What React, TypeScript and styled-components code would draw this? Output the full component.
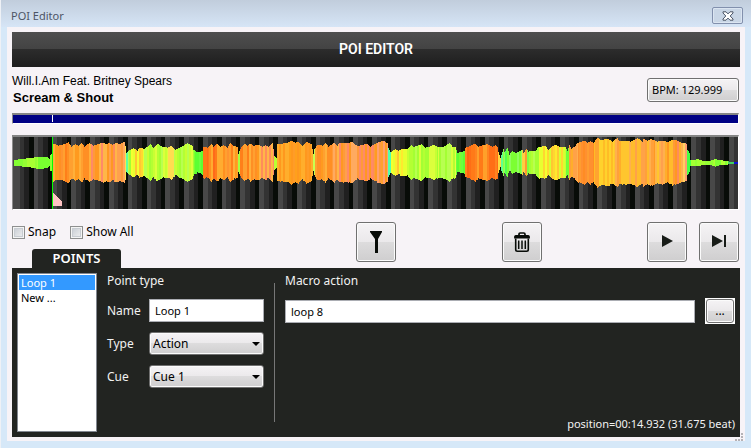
import React, { useState } from "react";
import styled, { createGlobalStyle, css } from "styled-components";

const ui = `"Noto Sans", "Open Sans", sans-serif`;
const arial = `"Liberation Sans", Arial, sans-serif`;

const Global = createGlobalStyle`
  *, *::before, *::after { box-sizing: border-box; }
  body { margin: 0; background: #d6e8f8; font: 12px/16px ${ui}; color: #000; }
  button, input, select { font: inherit; color: inherit; margin: 0; }
`;

const glossy = css`
  background: linear-gradient(#f5f3f5, #ebe9eb 49%, #dddcdd 50%, #cfcecf);
  border: 1px solid #707070;
  border-radius: 3px;
  box-shadow: inset 0 0 0 1px #fbfbfb;
`;

const Frame = styled.div`
  display: flex;
  flex-direction: column;
  min-height: 100vh;
  padding: 0 6px 7px;
  border-left: 1px solid #eef1f6;
`;

const TitleBar = styled.header`
  display: flex;
  align-items: center;
  justify-content: space-between;
  height: 27px;
  margin: 0 -6px;
  padding: 4px 8px 0 10px;
  background: linear-gradient(#c1cddc, #d6e5f6);
`;

const Title = styled.h1`
  margin: 0;
  font-size: 11px;
  font-weight: 400;
  line-height: 16px;
  color: #4d5566;
`;

const CloseButton = styled.button`
  display: flex;
  align-items: center;
  justify-content: center;
  width: 31px;
  height: 17px;
  padding: 0;
  border: 1px solid #8290ad;
  border-radius: 2px;
  background: #c9d6e6;
  box-shadow: inset 0 0 0 1px #dbe5f1;
`;

const Client = styled.main`
  display: flex;
  flex: 1;
  flex-direction: column;
  padding: 5px 5px 4px 5px;
  background: #f7f3f7;
`;

const Banner = styled.h2`
  margin: 0;
  height: 35px;
  background: linear-gradient(#4e4e4e, #434343 49%, #2c2c2c 50%, #1e1e1e);
  color: #fff;
  font: 600 14px/35px Roboto, ${arial};
  text-align: center;
`;

const TrackRow = styled.section`
  display: flex;
  align-items: flex-end;
  justify-content: space-between;
  height: 39px;
  padding-right: 1px;
`;

const Artist = styled.p`
  margin: 0;
  font: 12px/16px ${arial};
`;

const Song = styled(Artist)`
  padding-left: 1px;
  font-size: 13px;
  font-weight: 700;
  line-height: 17px;
`;

const BpmButton = styled.button`
  ${glossy}
  width: 92px;
  height: 24px;
  margin-bottom: 4px;
  padding: 0 4px;
  text-align: left;
  font-size: 11px;
`;

const Sunken = styled.div<{ $fill: string; $height: number }>`
  height: ${(p) => p.$height}px;
  border: 1px solid #fff;
  border-top: 2px solid #858585;
  border-left-color: #8c8c8c;
  background: ${(p) => p.$fill};
`;

const Overview = styled(Sunken)`
  margin: 7px 1px 11px 0;
  padding-left: 39px;
`;

const Cursor = styled.div`
  width: 1px;
  height: 7px;
  background: #fff;
`;

const WaveBox = styled(Sunken)`
  margin-right: 1px;
`;

const WaveSvg = styled.svg`
  display: block;
  width: 100%;
  height: 100%;
`;

const Tools = styled.section`
  display: grid;
  grid-template-columns: 2fr 1fr 1fr 1fr;
  height: 46px;
  margin-top: 12px;
`;

const ToolsLeft = styled.div`
  display: flex;
  flex-direction: column;
  justify-content: space-between;
`;

const Checks = styled.div`
  display: flex;
  gap: 14px;
  padding-top: 2px;
`;

const CheckLabel = styled.label`
  display: flex;
  align-items: center;
  gap: 3px;
  height: 16px;
  font-size: 12px;
`;

const CheckBox = styled.input`
  appearance: none;
  width: 13px;
  height: 13px;
  border: 1px solid #8e8f8f;
  background: linear-gradient(135deg, #c3c8d0, #f3f3f3);
  box-shadow: inset 0 0 0 1px #f4f4f4, inset 0 0 0 2px #c8ccd2;
  &:checked { background: #3a5f9a; }
`;

const Tab = styled.h3`
  width: 89px;
  height: 19px;
  margin: 0 0 0 20px;
  border-radius: 3px 3px 0 0;
  background: #222421;
  color: #fff;
  font: 600 13px/19px ${ui};
  text-align: center;
`;

const ToolCell = styled.div<{ $end?: boolean }>`
  display: flex;
  align-items: flex-start;
  justify-content: ${(p) => (p.$end ? "flex-end" : "center")};
  gap: 12px;
  padding-right: ${(p) => (p.$end ? 1 : 0)}px;
`;

const ToolButton = styled.button`
  ${glossy}
  display: flex;
  align-items: center;
  justify-content: center;
  width: 40px;
  height: 40px;
  padding: 0;
`;

const Panel = styled.section`
  display: flex;
  flex: 1;
  gap: 10px;
  padding: 5px;
  background: #222421;
  color: #f2f2f2;
`;

const PointList = styled.ul`
  width: 80px;
  margin: 0;
  padding: 1px;
  border: 1px solid #828790;
  background: #fff;
  list-style: none;
`;

const PointItem = styled.button<{ $selected: boolean }>`
  display: block;
  width: 100%;
  height: 15px;
  padding: 0 2px;
  border: 0;
  background: ${(p) => (p.$selected ? "#3399ff" : "transparent")};
  color: ${(p) => (p.$selected ? "#fff" : "#000")};
  font-size: 11px;
  line-height: 15px;
  text-align: left;
`;

const PointForm = styled.form`
  display: grid;
  grid-template-columns: 32px 115px;
  grid-template-rows: 16px 23px 23px 23px;
  align-items: center;
  gap: 10px;
  width: 157px;
`;

const GroupName = styled.h4`
  grid-column: 1 / -1;
  margin: 0;
  font-size: 12px;
  font-weight: 400;
  line-height: 16px;
`;

const TextBox = styled.input`
  width: 100%;
  min-width: 0;
  height: 23px;
  padding: 0 5px;
  border: 1px solid #abadb3;
  background: #fff;
  color: #000;
  font-size: 11px;
`;

const SelectWrap = styled.div`
  position: relative;
`;

const Select = styled.select`
  ${glossy}
  appearance: none;
  display: block;
  width: 100%;
  height: 23px;
  padding: 0 3px;
  color: #000;
`;

const Arrow = styled.svg`
  position: absolute;
  top: 10px;
  right: 4px;
  pointer-events: none;
`;

const Divider = styled.div`
  width: 1px;
  margin: 10px 0;
  background: #777;
`;

const Macro = styled.div`
  display: flex;
  flex: 1;
  flex-direction: column;
  justify-content: space-between;
`;

const MacroRow = styled.div`
  display: flex;
  align-items: center;
  gap: 10px;
  margin-top: 9px;
`;

const MoreFrame = styled.div`
  flex: none;
  padding: 1px;
  background: #fff;
`;

const MoreButton = styled.button`
  ${glossy}
  display: block;
  width: 28px;
  height: 24px;
  padding: 0;
  color: #000;
`;

const Position = styled.output`
  font-size: 11px;
  line-height: 16px;
  text-align: right;
`;

const Grip = styled.svg`
  position: absolute;
  right: 8px;
  bottom: 7px;
`;

const Shell = styled.div`
  position: relative;
`;

/* Envelope key points: [column, half height]. */
const points: [number, number][] = [
  [1, 2.6], [12, 4], [19, 4.6], [23, 5.7], [34, 5.4], [36, 3.4], [37, 8], [39, 10],
  [40, 19], [45, 17], [49, 17.6], [55, 20.4], [58, 16], [62, 18.4], [65, 16.5], [68, 20], [71, 16], [76, 19.4], [80, 17], [90, 20], [93, 18.4], [96, 19.4], [99, 17.6], [103, 20], [106, 18.4], [111, 20.6], [112, 17],
  [113, 10], [117, 12.7], [120, 14.3], [124, 12], [126, 15], [131, 13.6], [137, 18.4], [140, 14.4], [144, 19], [149, 15.6], [154, 15], [158, 17], [162, 12.4], [165, 14.4], [170, 17], [174, 19.4], [179, 17], [180, 12.7], [184, 10.3],
  [187, 10.6], [189, 12],
  [190, 16], [194, 15], [198, 19], [200, 16], [204, 19], [207, 15.8], [210, 17.6], [214, 15], [217, 20], [220, 16.6], [224, 15.6], [225, 9], [227, 13.7], [231, 19], [234, 16.4], [237, 19], [240, 16.6], [245, 18], [249, 15.4], [252, 17.6], [255, 15.6], [259, 19.4], [261, 7], [263, 5],
  [264, 18.4], [269, 19], [274, 19.6], [278, 22], [282, 20], [285, 21], [289, 17], [293, 21], [298, 18.4], [300, 9], [301, 13.4], [304, 17.6], [309, 17], [312, 20], [315, 16], [321, 20], [324, 17], [326, 20], [332, 19.4], [339, 20.4], [344, 16.4], [349, 17.6], [354, 19], [357, 16], [362, 18.6], [365, 20.4], [370, 21.7], [374, 19.4],
  [375, 14.4], [377, 10.4], [382, 13.4], [385, 11.6], [389, 13.7], [394, 13.4], [398, 17.6], [400, 15.6], [404, 16.6], [408, 18.4], [412, 15], [416, 15.6], [420, 17.6], [425, 15.6], [430, 15.6], [436, 19.4], [439, 16], [442, 15.6], [444, 9.4], [447, 10.4], [451, 11.6],
  [452, 15], [455, 15.6], [462, 19], [465, 16], [470, 17.6], [474, 18.4], [479, 15.6], [482, 17.6], [484, 16], [485, 10.4], [487, 4.4], [490, 13.7], [491, 10.4], [494, 14.4], [496, 7.7], [499, 11.7], [502, 9.4], [509, 12.6], [510, 9.4], [513, 13.6], [515, 11], [522, 11.7], [525, 15.6], [532, 16.4], [535, 12.7], [538, 15.6], [542, 17.6], [547, 15.6], [552, 15.6], [554, 12],
  [556, 17.7], [558, 14], [561, 15.6], [564, 19.4], [571, 22], [574, 19.6], [577, 21.6], [580, 19.4], [584, 25], [587, 22.6], [595, 23.6], [599, 21], [604, 24.4], [606, 21.6], [612, 22], [617, 21], [624, 24.4], [629, 21], [630, 23.6], [634, 21.6], [637, 23.6], [644, 21], [649, 22], [654, 20.4], [659, 22.6], [664, 22], [669, 19.4], [673, 19], [674, 12.7], [676, 9.4], [677, 3],
  [680, 2.6], [684, 3.4], [689, 2], [697, 2], [702, 3.6], [706, 2.4], [714, 1.5], [717, 0.6], [725, 0.6],
];

const orange = ["#ff8f24", "#ff9a1f", "#ffa030", "#ff7f1a", "#ffb03a", "#ff9430"];
const blush = ["#ff9a3a", "#ff8c5a", "#ffa04e", "#ffb648", "#ff8a68", "#ff9822", "#ffaa60"];
const lime = ["#b4ff33", "#c8ff33", "#a4ff33", "#dcff3c", "#b8ff50"];
const yellow = ["#ffe92e", "#ffd730", "#f4ff30", "#ffc832", "#e8ff30"];
const green = ["#5cff33", "#78ff33", "#6cff40"];
const gold = ["#ffae2a", "#ffbc2c", "#ffa03a", "#ffc62e", "#ffa248", "#ffb04e"];
const ember = ["#ff6e16", "#ff7a18", "#ff8420", "#ff6410", "#ffa02a"];

/* Colour ranges: [last column, palette]. */
const ranges: [number, string[]][] = [
  [9, ["#84ff33"]], [24, ["#a8ff33", "#94ff33"]], [36, ["#78ff30"]], [39, ["#c0ff40", "#90ff33"]],
  [77, orange], [111, blush], [112, ["#ffe050"]], [114, ["#60ffa0"]], [117, lime], [130, yellow],
  [154, lime], [160, ["#d0ff50", "#ffdc50"]], [180, lime], [189, green],
  [194, ember], [211, ["#ff7a1a", "#ff9020", "#ffac30", "#ff6a1a"]], [224, orange], [226, ["#a8ff40"]],
  [245, orange], [260, blush], [263, ["#b8ff33"]], [299, ["#ffa01c", "#ff981e", "#ff9c28", "#ffae2c"]],
  [301, ["#c8ff50"]], [318, orange], [360, blush], [374, ["#ff9a40", "#ffac60", "#ffa070", "#ff9c20", "#ffa030"]],
  [377, ["#50ffb0"]], [393, yellow], [424, lime], [442, [...lime, "#e8ff40"]], [451, green],
  [484, ember], [487, ["#ffd840"]], [490, ["#60ff90", "#90ff40"]], [508, ["#50ff50", "#7cff33", "#90ff60"]],
  [515, ["#ff9a30", "#80ff40", "#ffd040"]], [525, lime], [552, [...yellow, "#d8ff30", "#c8ff33"]], [555, green],
  [564, gold], [580, ["#ff8c24", "#ff9c30", "#ff9030"]], [600, ["#ffbc26", "#ffd22c", "#ffa430"]],
  [640, gold], [669, blush.concat(gold)], [673, ["#ffd060", "#ff9c70"]], [677, ["#44ff44"]],
  [700, ["#94ff33", "#a4ff33"]], [714, ["#80ff33", "#b0ff33"]], [720, ["#40d060"]], [725, ["#1010d0"]],
];

const noise = (n: number) => {
  const v = Math.sin(n * 127.1) * 43758.5453;
  return v - Math.floor(v);
};

const heightAt = (x: number) => {
  const i = Math.max(1, points.findIndex(([px]) => px >= x));
  const [x0, h0] = points[i - 1];
  const [x1, h1] = points[i];
  return h0 + ((h1 - h0) * Math.max(0, x - x0)) / Math.max(1, x1 - x0);
};

const colourAt = (x: number) => {
  const palette = (ranges.find(([end]) => x <= end) ?? ranges[ranges.length - 1])[1];
  return palette[Math.floor(noise(Math.floor(x / 2)) * palette.length)];
};

const columns = Array.from({ length: 724 }, (_, i) => {
  const x = i + 1;
  const h = heightAt(x);
  const top = Math.round(25.5 - h);
  const bottom = Math.round(26 + h - (h > 8 ? noise(x) : 0));
  return { x, top, height: Math.max(1, bottom - top), fill: colourAt(x) };
});

const shades = ["#484848", "#333333", "#202020", "#080c08"];
const stripes = Array.from({ length: 160 }, (_, i) => ({
  x: Math.round(2 + (i * 18.79) / 4),
  fill: shades[i % 4],
}));

function Waveform() {
  return (
    <WaveSvg viewBox="0 0 725 72" preserveAspectRatio="none" shapeRendering="crispEdges" aria-label="Waveform">
      <rect width="725" height="72" fill="#484848" />
      {stripes.map((s, i) => (
        <rect key={i} x={s.x} width="5" height="72" fill={s.fill} />
      ))}
      {columns.map((c) => (
        <rect key={c.x} x={c.x} y={c.top} width="1" height={c.height} fill={c.fill} />
      ))}
      <rect x="39" width="1" height="72" fill="#00ff00" />
      <path d="M40 56l9 9v4h-9z" fill="#ffc4c4" />
    </WaveSvg>
  );
}

const TrashIcon = () => (
  <svg width="18" height="20" viewBox="0 0 18 20" fill="none" stroke="#080c08">
    <path d="M6 3.5V2.2Q6 1 7.200 1h3.600Q12 1 12 2.200v1.300" strokeWidth="1.700" />
    <path d="M1.800 5.700V4.800q0-1.200 1.200-1.200h12q1.200 0 1.200 1.200v.9z" fill="#080c08" strokeWidth="1.400" />
    <path d="M2.700 6.500V17.500q0 1.700 1.700 1.700h9.200q1.700 0 1.700-1.700V6.500" strokeWidth="1.600" />
    <path d="M5.700 8.500v8.500M9 8.500v8.500M12.300 8.500v8.500" strokeWidth="1.500" />
  </svg>
);

export default function App() {
  const [selected, setSelected] = useState(0);
  return (
    <Shell>
      <Global />
      <Frame>
        <TitleBar>
          <Title>POI Editor</Title>
          <CloseButton aria-label="Close">
            <svg width="12" height="10" viewBox="0 0 12 10">
              <path d="M1 .8h3L6 2.900 8 .8h3V2L8.200 5 11 8v1.200H8L6 7.100 4 9.200H1V8l2.800-3L1 2z" fill="#fff" stroke="#4a5466" />
            </svg>
          </CloseButton>
        </TitleBar>
        <Client>
          <Banner>POI EDITOR</Banner>
          <TrackRow>
            <div>
              <Artist>Will.I.Am Feat. Britney Spears</Artist>
              <Song>Scream &amp; Shout</Song>
            </div>
            <BpmButton>BPM: 129.999</BpmButton>
          </TrackRow>
          <Overview $fill="#000084" $height={11}>
            <Cursor />
          </Overview>
          <WaveBox $fill="#202020" $height={75}>
            <Waveform />
          </WaveBox>
          <Tools>
            <ToolsLeft>
              <Checks>
                <CheckLabel><CheckBox type="checkbox" />Snap</CheckLabel>
                <CheckLabel><CheckBox type="checkbox" />Show All</CheckLabel>
              </Checks>
              <Tab>POINTS</Tab>
            </ToolsLeft>
            <ToolCell>
              <ToolButton aria-label="Add point">
                <svg width="12" height="22" viewBox="0 0 12 22">
                  <path d="M0 0h12v1L8 8v14H5V8L0 1z" fill="#080c08" />
                </svg>
              </ToolButton>
            </ToolCell>
            <ToolCell>
              <ToolButton aria-label="Delete point"><TrashIcon /></ToolButton>
            </ToolCell>
            <ToolCell $end>
              <ToolButton aria-label="Play">
                <svg width="12" height="14" viewBox="0 0 12 14"><path d="M1 0l11 6L1 12z" fill="#181c18" /></svg>
              </ToolButton>
              <ToolButton aria-label="Skip to next">
                <svg width="14" height="14" viewBox="0 0 14 14"><path d="M0 0l11 6L0 12zM12 0h2v12h-2z" fill="#181c18" /></svg>
              </ToolButton>
            </ToolCell>
          </Tools>
          <Panel>
            <PointList>
              {["Loop 1", "New ..."].map((name, i) => (
                <li key={name}>
                  <PointItem $selected={i === selected} onClick={() => setSelected(i)}>{name}</PointItem>
                </li>
              ))}
            </PointList>
            <PointForm>
              <GroupName>Point type</GroupName>
              <label htmlFor="name">Name</label>
              <TextBox id="name" defaultValue="Loop 1" />
              <label htmlFor="type">Type</label>
              <SelectWrap>
                <Select id="type"><option>Action</option></Select>
                <Arrow width="8" height="4" viewBox="0 0 8 4"><path d="M0 0h8L4 4z" /></Arrow>
              </SelectWrap>
              <label htmlFor="cue">Cue</label>
              <SelectWrap>
                <Select id="cue"><option>Cue 1</option></Select>
                <Arrow width="8" height="4" viewBox="0 0 8 4"><path d="M0 0h8L4 4z" /></Arrow>
              </SelectWrap>
            </PointForm>
            <Divider />
            <Macro>
              <div>
                <GroupName as="label" htmlFor="macro">Macro action</GroupName>
                <MacroRow>
                  <TextBox id="macro" defaultValue="loop 8" />
                  <MoreFrame><MoreButton aria-label="Browse actions">...</MoreButton></MoreFrame>
                </MacroRow>
              </div>
              <Position>position=00:14.932 (31.675 beat)</Position>
            </Macro>
          </Panel>
        </Client>
      </Frame>
      <Grip width="8" height="8" viewBox="0 0 8 8" fill="#b4b2b6">
        <path d="M6 0h2v2H6zM6 3h2v2H6zM3 6h2v2H3zM6 6h2v2H6zM0 6h2v2H0z" />
      </Grip>
    </Shell>
  );
}
